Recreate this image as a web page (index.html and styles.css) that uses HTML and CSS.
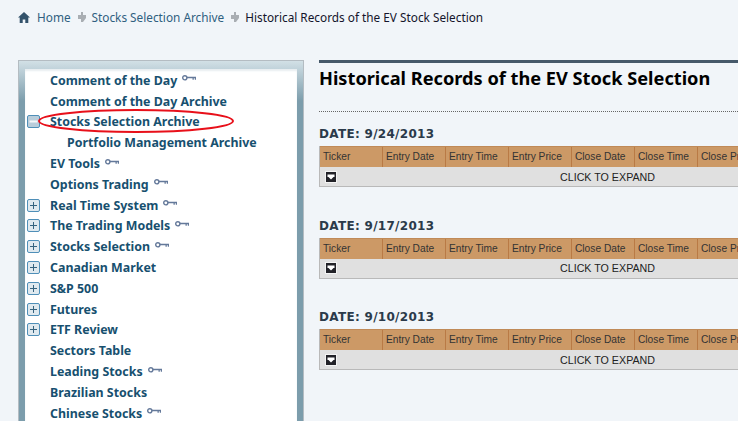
FILE: index.html

```html
<!DOCTYPE html>
<html lang="en">
<head>
    <meta charset="UTF-8">
    <title>Historical Records of the EV Stock Selection</title>
    <link rel="stylesheet" href="styles.css">
</head>
<body>
    <svg class="defs" width="0" height="0">
        <symbol id="key" viewBox="0 0 14 6">
            <circle cx="2.8" cy="2.8" r="2.100" fill="none" stroke="#64799a" stroke-width="1.400"/>
            <path d="M5 1.700h9v3.100h-1.200v-1.500h-1v1.500h-1.300v-1.500H5z" fill="#64799a"/>
        </symbol>
        <symbol id="plus" viewBox="0 0 13 13">
            <rect x=".5" y=".5" width="12" height="12" rx="1.500" fill="#dfe9ef" stroke="#4f8fb8"/>
            <path d="M3 6.500h7M6.500 3v7" stroke="#35637f" stroke-width="1"/>
        </symbol>
        <symbol id="minus" viewBox="0 0 13 13">
            <rect x=".5" y=".5" width="12" height="12" rx="1.500" fill="#b9cddb" stroke="#4f8fb8"/>
            <path d="M2.500 6.500h8" stroke="#f4f7f9" stroke-width="2"/>
        </symbol>
        <symbol id="sep" viewBox="0 0 8 11">
            <path d="M3 0h2v3h3v3l-3 4H3V7H0V3h3z" fill="#a9aeb3"/>
        </symbol>
        <symbol id="expand" viewBox="0 0 12 12">
            <rect x=".5" y=".5" width="11" height="11" fill="#222228" stroke="#f4f4f4"/>
            <path d="M2.500 3.500h7v2.500H8.500L6 8.500 3.500 6H2.500z" fill="#fff"/>
        </symbol>
    </svg>

    <div class="breadcrumb">
        <svg class="home-icon" viewBox="0 0 12 11"><path d="M6 0l6 5.500h-1.700V11H7.300V7.500H4.700V11H1.700V5.500H0z" fill="#33526b"/></svg>
        <a class="crumb" href="#">Home</a>
        <svg class="sep-icon"><use href="#sep"/></svg>
        <a class="crumb" href="#">Stocks Selection Archive</a>
        <svg class="sep-icon"><use href="#sep"/></svg>
        <span class="crumb-current">Historical Records of the EV Stock Selection</span>
    </div>

    <div class="page">
        <div class="sidebar">
            <ul class="menu">
                <li><span class="toggle"></span><a href="#">Comment of the Day</a><svg class="key"><use href="#key"/></svg></li>
                <li><span class="toggle"></span><a href="#">Comment of the Day Archive</a></li>
                <li><svg class="toggle"><use href="#minus"/></svg><a href="#">Stocks Selection Archive</a></li>
                <li class="sub"><span class="toggle"></span><a href="#">Portfolio Management Archive</a></li>
                <li><span class="toggle"></span><a href="#">EV Tools</a><svg class="key"><use href="#key"/></svg></li>
                <li><span class="toggle"></span><a href="#">Options Trading</a><svg class="key"><use href="#key"/></svg></li>
                <li><svg class="toggle"><use href="#plus"/></svg><a href="#">Real Time System</a><svg class="key"><use href="#key"/></svg></li>
                <li><svg class="toggle"><use href="#plus"/></svg><a href="#">The Trading Models</a><svg class="key"><use href="#key"/></svg></li>
                <li><svg class="toggle"><use href="#plus"/></svg><a href="#">Stocks Selection</a><svg class="key"><use href="#key"/></svg></li>
                <li><svg class="toggle"><use href="#plus"/></svg><a href="#">Canadian Market</a></li>
                <li><svg class="toggle"><use href="#plus"/></svg><a href="#">S&amp;P 500</a></li>
                <li><svg class="toggle"><use href="#plus"/></svg><a href="#">Futures</a></li>
                <li><svg class="toggle"><use href="#plus"/></svg><a href="#">ETF Review</a></li>
                <li><span class="toggle"></span><a href="#">Sectors Table</a></li>
                <li><span class="toggle"></span><a href="#">Leading Stocks</a><svg class="key"><use href="#key"/></svg></li>
                <li><span class="toggle"></span><a href="#">Brazilian Stocks</a></li>
                <li><span class="toggle"></span><a href="#">Chinese Stocks</a><svg class="key"><use href="#key"/></svg></li>
            </ul>
            <svg class="circle-mark" viewBox="0 0 196 24"><ellipse cx="98" cy="12" rx="97" ry="11" fill="none" stroke="#e8101a" stroke-width="2"/></svg>
        </div>

        <div class="content">
            <h1>Historical Records of the EV Stock Selection</h1>

            <div class="record">
                <h3>DATE: 9/24/2013</h3>
                <div class="grid">
                    <div class="grid-head">
                        <div class="cell">Ticker</div><div class="cell">Entry Date</div><div class="cell">Entry Time</div><div class="cell">Entry Price</div><div class="cell">Close Date</div><div class="cell">Close Time</div><div class="cell">Close Price</div>
                    </div>
                    <div class="grid-row"><svg class="expand"><use href="#expand"/></svg><span class="expand-text">CLICK TO EXPAND</span></div>
                </div>
            </div>

            <div class="record">
                <h3>DATE: 9/17/2013</h3>
                <div class="grid">
                    <div class="grid-head">
                        <div class="cell">Ticker</div><div class="cell">Entry Date</div><div class="cell">Entry Time</div><div class="cell">Entry Price</div><div class="cell">Close Date</div><div class="cell">Close Time</div><div class="cell">Close Price</div>
                    </div>
                    <div class="grid-row"><svg class="expand"><use href="#expand"/></svg><span class="expand-text">CLICK TO EXPAND</span></div>
                </div>
            </div>

            <div class="record">
                <h3>DATE: 9/10/2013</h3>
                <div class="grid">
                    <div class="grid-head">
                        <div class="cell">Ticker</div><div class="cell">Entry Date</div><div class="cell">Entry Time</div><div class="cell">Entry Price</div><div class="cell">Close Date</div><div class="cell">Close Time</div><div class="cell">Close Price</div>
                    </div>
                    <div class="grid-row"><svg class="expand"><use href="#expand"/></svg><span class="expand-text">CLICK TO EXPAND</span></div>
                </div>
            </div>
        </div>
    </div>
</body>
</html>
```

FILE: styles.css

```css
html, body {
    height: 421px;
    overflow: hidden;
}
body {
    margin: 0;
    background-color: #f1f5f9;
    font-family: 'Noto Sans', sans-serif;
}
a {
    text-decoration: none;
}
.defs {
    position: absolute;
}
.breadcrumb {
    display: flex;
    align-items: center;
    height: 34px;
    padding: 0 0 2px 18px;
    font-size: 11.800px;
}
.home-icon {
    width: 12px;
    height: 11px;
    margin-right: 7px;
}
.sep-icon {
    width: 8px;
    height: 11px;
    margin: 0 6px 0 7px;
}
.crumb {
    color: #2f5f80;
}
.crumb-current {
    color: #14142b;
}
.page {
    display: flex;
    align-items: flex-start;
    padding: 24px 0 0 18px;
}
.sidebar {
    position: relative;
    flex: none;
    box-sizing: border-box;
    width: 286px;
    height: 361px;
    padding: 8px 6px 0;
    border: 1px solid #b4bcc2;
    border-bottom: 0;
    background: linear-gradient(#d2e0e6, #7c9dac 40px);
}
.menu {
    list-style: none;
    margin: 0;
    padding: 1px 0 0;
    background-color: #fff;
    height: 352px;
    overflow: hidden;
    box-shadow: inset 0 2px 2px #e8eef1;
}
.menu li {
    display: flex;
    align-items: center;
    height: 20.800px;
    font-size: 12.400px;
    font-weight: bold;
}
.menu a {
    color: #17506f;
}
.toggle {
    flex: none;
    width: 13px;
    height: 13px;
    margin: 0 10px 0 2px;
}
.sub {
    padding-left: 17px;
}
.key {
    width: 14px;
    height: 6px;
    margin: -4px 0 0 5px;
}
.circle-mark {
    position: absolute;
    left: 19px;
    top: 48px;
    width: 196px;
    height: 24px;
}
.content {
    flex: none;
    width: 419px;
    margin-left: 15px;
    border-top: 3px solid #46596a;
    overflow: hidden;
}
h1 {
    margin: 0;
    height: 45px;
    border-bottom: 1px dotted #666;
    padding-top: 3px;
    font-size: 18.200px;
    line-height: 25px;
    color: #000;
}
.record {
    height: 91.500px;
}
h3 {
    margin: 0;
    height: 34px;
    box-sizing: border-box;
    padding-top: 15px;
    font-family: 'DejaVu Sans', sans-serif;
    font-size: 12px;
    letter-spacing: 0.300px;
    line-height: 15px;
    color: #2b3a4a;
}
.grid {
    width: 480px;
    border: 1px solid #b9b9b9;
    border-top: 0;
}
.grid-head {
    display: flex;
    height: 20px;
    border-top: 1px solid #c08a58;
    background-color: #cc9966;
}
.cell {
    flex: none;
    box-sizing: border-box;
    width: 63px;
    padding-left: 3px;
    border-right: 1px solid #b97a45;
    font-family: 'Liberation Sans', sans-serif;
    font-size: 10.200px;
    line-height: 19px;
    color: #333;
}
.grid-row {
    position: relative;
    display: flex;
    align-items: center;
    height: 19px;
    background-color: #e0e0e0;
}
.expand {
    width: 12px;
    height: 12px;
    margin-left: 5px;
}
.expand-text {
    margin-left: 223px;
    font-family: 'Liberation Sans', sans-serif;
    font-size: 10.700px;
    color: #222;
}
```
